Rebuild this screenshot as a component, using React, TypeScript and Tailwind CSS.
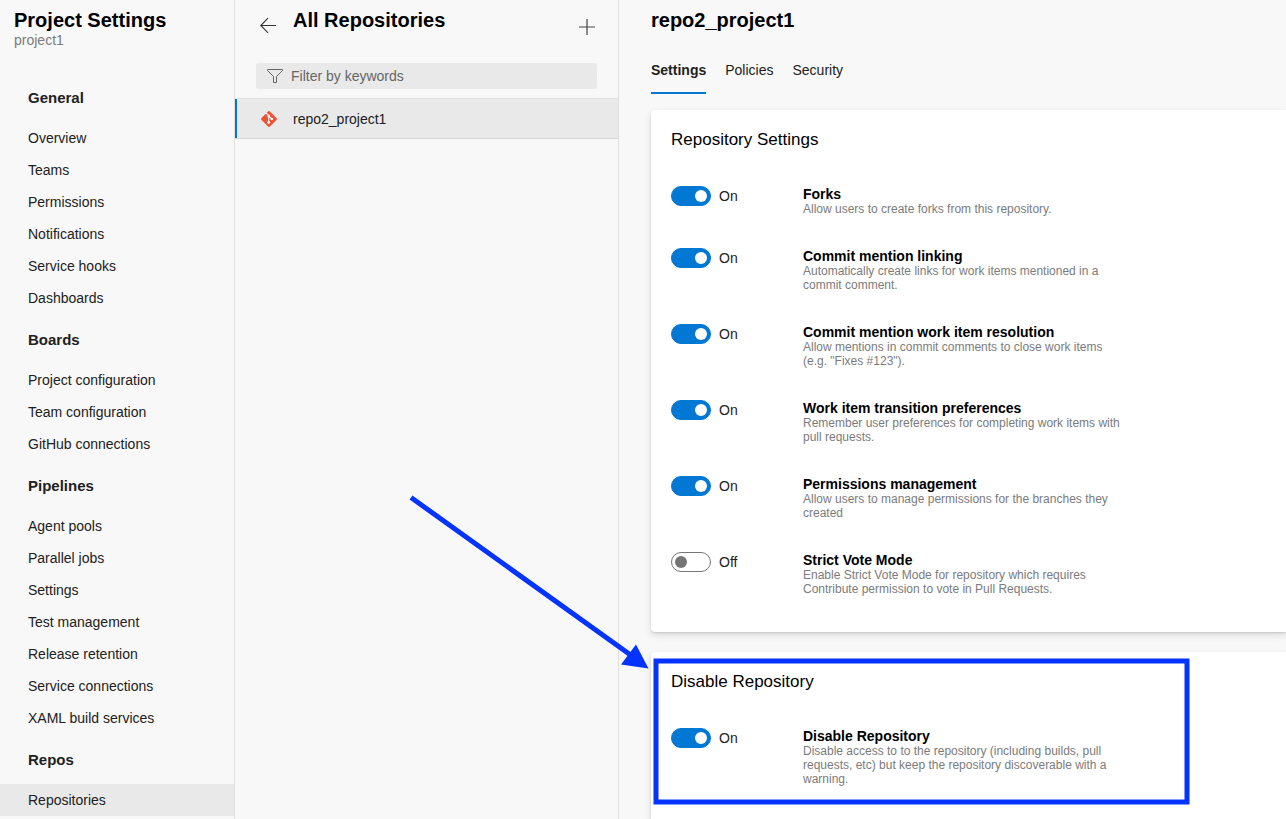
import { useId, useState } from "react";

const navGroups = [
  {
    title: "General",
    items: ["Overview", "Teams", "Permissions", "Notifications", "Service hooks", "Dashboards"],
  },
  {
    title: "Boards",
    items: ["Project configuration", "Team configuration", "GitHub connections"],
  },
  {
    title: "Pipelines",
    items: [
      "Agent pools",
      "Parallel jobs",
      "Settings",
      "Test management",
      "Release retention",
      "Service connections",
      "XAML build services",
    ],
  },
  { title: "Repos", items: ["Repositories"] },
];

type Setting = { title: string; description: string; on: boolean };

const repositorySettings: Setting[] = [
  { title: "Forks", description: "Allow users to create forks from this repository.", on: true },
  {
    title: "Commit mention linking",
    description: "Automatically create links for work items mentioned in a commit comment.",
    on: true,
  },
  {
    title: "Commit mention work item resolution",
    description: 'Allow mentions in commit comments to close work items (e.g. "Fixes #123").',
    on: true,
  },
  {
    title: "Work item transition preferences",
    description: "Remember user preferences for completing work items with pull requests.",
    on: true,
  },
  {
    title: "Permissions management",
    description: "Allow users to manage permissions for the branches they created",
    on: true,
  },
  {
    title: "Strict Vote Mode",
    description:
      "Enable Strict Vote Mode for repository which requires Contribute permission to vote in Pull Requests.",
    on: false,
  },
];

const disableSettings: Setting[] = [
  {
    title: "Disable Repository",
    description:
      "Disable access to to the repository (including builds, pull requests, etc) but keep the repository discoverable with a warning.",
    on: true,
  },
];

function GitIcon() {
  return (
    <svg viewBox="0 0 16 16" className="size-4 shrink-0" aria-hidden="true">
      <path
        d="M7.300 0.300Q8 -0.300 8.700 0.300L15.700 7.300Q16.300 8 15.700 8.700L8.700 15.700Q8 16.300 7.300 15.700L0.300 8.700Q-0.300 8 0.300 7.300Z"
        fill="#f05133"
      />
      <path d="M5.200 2.200L7.700 4.700V11.300M7.700 4.900L10.600 7.800" fill="none" stroke="#fff" strokeWidth="1.1" />
      <circle cx="7.700" cy="4.900" r="1.300" fill="#fff" />
      <circle cx="7.700" cy="11.500" r="1.400" fill="#fff" />
      <circle cx="10.800" cy="8" r="1.300" fill="#fff" />
    </svg>
  );
}

function SettingRow({ title, description, on }: Setting) {
  const id = useId();
  const [checked, setChecked] = useState(on);
  return (
    <div className="flex items-start">
      <div className="flex w-[132px] shrink-0 items-center gap-2">
        <input
          id={id}
          type="checkbox"
          role="switch"
          aria-label={title}
          checked={checked}
          onChange={(e) => setChecked(e.target.checked)}
          className="flex h-5 w-10 appearance-none items-center rounded-full border border-[#757575] bg-white px-[3px] before:block before:size-3 before:rounded-full before:bg-[#757575] before:content-[''] checked:justify-end checked:border-[#0078d4] checked:bg-[#0078d4] checked:before:bg-white"
        />
        <label htmlFor={id} className="text-sm leading-5 text-[#212121]">
          {checked ? "On" : "Off"}
        </label>
      </div>
      <div className="max-w-80">
        <h3 className="text-sm leading-4 font-bold text-black">{title}</h3>
        <p className="text-xs leading-[14px] text-[#7b7b7b]">{description}</p>
      </div>
    </div>
  );
}

function SettingsCard({ title, settings }: { title: string; settings: Setting[] }) {
  return (
    <section className="rounded-l bg-white px-5 pt-5 pb-9 shadow-[0_3px_7px_rgba(0,0,0,0.13),0_1px_2px_rgba(0,0,0,0.11)]">
      <h2 className="text-[17px] leading-5 text-black">{title}</h2>
      <div className="mt-9 flex flex-col gap-8">
        {settings.map((s) => (
          <SettingRow key={s.title} {...s} />
        ))}
      </div>
    </section>
  );
}

export default function App() {
  return (
    <div className="relative flex h-screen overflow-hidden bg-[#f8f8f8] font-['Liberation_Sans',Arial,sans-serif] text-sm text-[#212121]">
      <aside className="w-[235px] shrink-0 border-r border-[#dfdfdf] pt-2">
        <h1 className="px-3.5 text-xl leading-6 font-bold text-black">Project Settings</h1>
        <p className="px-3.5 leading-4 text-[#7b7b7b]">project1</p>
        <nav className="mt-6">
          {navGroups.map((group) => (
            <div key={group.title}>
              <h2 className="px-7 pt-4 pb-3.5 text-[15px] leading-5 font-bold">{group.title}</h2>
              <ul>
                {group.items.map((item) => (
                  <li key={item}>
                    <a
                      href="#"
                      className={
                        item === "Repositories"
                          ? "block bg-[#e9e9e9] px-7 leading-8"
                          : "block px-7 leading-8"
                      }
                    >
                      {item}
                    </a>
                  </li>
                ))}
              </ul>
            </div>
          ))}
        </nav>
      </aside>

      <section className="w-96 shrink-0 border-r border-[#dfdfdf] pt-2">
        <header className="flex items-start pr-[23px] pl-[25px]">
          <button type="button" aria-label="Back" className="mt-[9px] mr-[17px] size-4">
            <svg viewBox="0 0 16 16" className="size-4" fill="none" stroke="#333" strokeWidth="1.1">
              <path d="M16 8.5H1M8 1.2L0.8 8.5L8 15.8" />
            </svg>
          </button>
          <h2 className="flex-1 text-xl leading-6 font-bold text-black">All Repositories</h2>
          <button type="button" aria-label="Add repository" className="mt-[11px] size-4">
            <svg viewBox="0 0 16 16" className="size-4" fill="none" stroke="#444" strokeWidth="1.2">
              <path d="M0 8H16M8 0V16" />
            </svg>
          </button>
        </header>
        <div className="mt-7 mr-[21px] mb-[9px] ml-[21px] flex h-[26px] items-center gap-2 rounded-xs bg-[#e9e9e9] pr-2 pl-[11px]">
          <svg viewBox="0 0 16 16" className="size-4 shrink-0" fill="none" stroke="#666" strokeWidth="1">
            <path d="M0.500 1.500H15.500V2.500L9.500 8.500V14.500H6.500V8.500L0.500 2.500Z" />
          </svg>
          <input
            type="text"
            aria-label="Filter by keywords"
            placeholder="Filter by keywords"
            className="min-w-0 flex-1 bg-transparent leading-5 outline-none placeholder:text-[#666]"
          />
        </div>
        <div className="border-y border-t-[#e0e0e0] border-b-[#d6d6d6]">
          <a href="#" className="flex h-[39px] items-center gap-4 border-l-2 border-[#0078d4] bg-[#e9e9e9] pl-6">
            <GitIcon />
            repo2_project1
          </a>
        </div>
      </section>

      <main className="min-w-0 flex-1 pt-2 pl-8">
        <h1 className="text-xl leading-6 font-bold text-black">repo2_project1</h1>
        <div role="tablist" className="mt-3.5 mb-4 flex h-12 gap-[19px]">
          <button
            type="button"
            role="tab"
            aria-selected="true"
            className="border-y-2 border-t-transparent border-b-[#0078d4] font-bold"
          >
            Settings
          </button>
          <button type="button" role="tab" aria-selected="false">
            Policies
          </button>
          <button type="button" role="tab" aria-selected="false">
            Security
          </button>
        </div>
        <div className="flex flex-col gap-5">
          <SettingsCard title="Repository Settings" settings={repositorySettings} />
          <SettingsCard title="Disable Repository" settings={disableSettings} />
        </div>
      </main>

      <svg
        aria-hidden="true"
        width="1286"
        height="819"
        className="pointer-events-none absolute top-0 left-0"
        fill="none"
        stroke="#0433ff"
        strokeWidth="5"
      >
        <rect x="656" y="661" width="531" height="141" />
        <path d="M411 497.500L632 656" />
        <path d="M648.500 668.500L636 644.500L621 664.500Z" fill="#0433ff" stroke="none" />
      </svg>
    </div>
  );
}
